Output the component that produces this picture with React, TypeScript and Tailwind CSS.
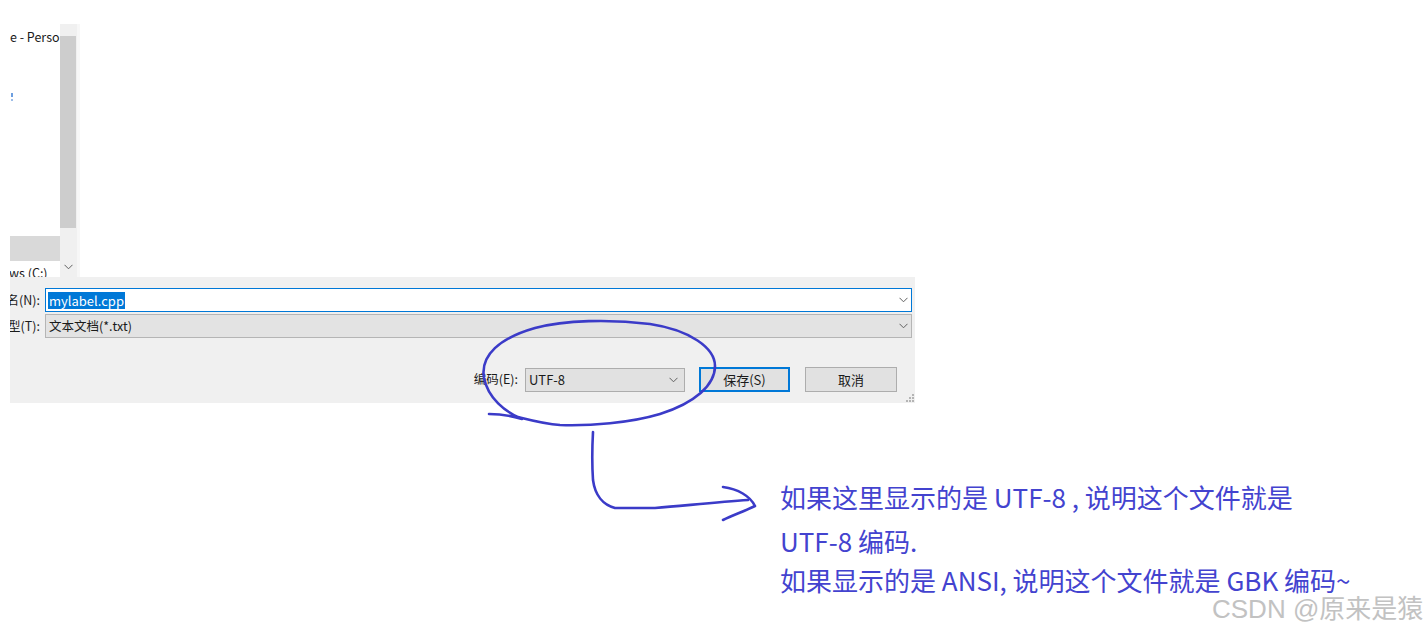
import React from 'react';

const Chevron = ({ className = '' }: { className?: string }) => (
  <svg width="9" height="6" viewBox="0 0 9 6" className={className}>
    <path d="M0.5 0.8 L4.5 4.8 L8.5 0.8" fill="none" stroke="#606060" strokeWidth="1" />
  </svg>
);

const App: React.FC = () => {
  return (
    <div
      className="relative w-[1427px] h-[634px] bg-white overflow-hidden text-[12.5px] text-[#1a1a1a]"
      style={{ fontFamily: '"Noto Sans CJK SC", "Noto Sans", sans-serif' }}
    >
      <div className="pl-[10px]">
        {/* top part of the save dialog: nav pane + scrollbar */}
        <div className="flex h-[277px]">
          <div className="w-[50px] h-[277px] flex flex-col overflow-hidden">
            <div className="h-[29px] shrink-0" />
            <div className="h-[15px] leading-[15px] whitespace-nowrap shrink-0">e - Personal</div>
            <div className="mt-[49px] ml-[1px] flex flex-col gap-[2px] shrink-0">
              <div className="w-[2px] h-[4px] bg-[#6d9fe0]" />
              <div className="w-[2px] h-[2px] bg-[#9dbde8]" />
            </div>
            <div className="mt-[135px] h-[25px] bg-[#d9d9d9] shrink-0" />
            <div className="mt-[4px] leading-[16px] whitespace-nowrap -ml-[1px] shrink-0">ws (C:)</div>
          </div>
          <div className="mt-[24px] w-[17px] h-[253px] bg-[#f0f0f0] flex flex-col">
            <div className="mt-[12px] w-[16px] h-[192px] bg-[#cdcdcd] shrink-0" />
            <div className="mt-[36px] flex justify-center shrink-0">
              <Chevron />
            </div>
          </div>
          <div className="mt-[24px] w-[3px] h-[253px] bg-[#f7f7f7]" />
        </div>

        {/* bottom part: file name / type / encoding */}
        <div className="relative w-[905px] h-[126px] bg-[#f0f0f0] pt-[11px]">
          <div className="flex h-[24px]">
            <div className="w-[35px] flex justify-end items-center overflow-hidden whitespace-nowrap pr-[5px]">文件名(N):</div>
            <div className="w-[867px] border border-[#0078d7] bg-white flex items-center justify-between pl-[2px] pr-[3px]">
              <span className="bg-[#0078d7] text-white text-[13px] leading-[17px] px-[1px]">mylabel.cpp</span>
              <Chevron />
            </div>
          </div>
          <div className="flex h-[24px] mt-[2px]">
            <div className="w-[35px] flex justify-end items-center overflow-hidden whitespace-nowrap pr-[5px]">保存类型(T):</div>
            <div className="w-[867px] border border-[#b5b5b5] bg-[#e3e3e3] flex items-center justify-between pl-[3px] pr-[3px]">
              <span>文本文档(*.txt)</span>
              <Chevron />
            </div>
          </div>
          <div className="flex justify-end items-center h-[25px] mt-[29px] pr-[18px]">
            <span className="mr-[7px]">编码(E):</span>
            <div className="w-[160px] h-[24px] border border-[#adadad] bg-[#e1e1e1] flex items-center justify-between pl-[3px] pr-[6px]">
              <span className="text-[13px]">UTF-8</span>
              <Chevron />
            </div>
            <button className="ml-[14px] w-[91px] h-[25px] border-2 border-[#0078d7] bg-[#e1e1e1] flex items-center justify-center text-[13px]">
              保存(S)
            </button>
            <button className="ml-[15px] w-[92px] h-[25px] border border-[#adadad] bg-[#e1e1e1] flex items-center justify-center text-[13px]">
              取消
            </button>
          </div>
          <svg className="absolute right-[1px] bottom-[1px]" width="10" height="10" viewBox="0 0 10 10">
            {[
              [8, 2],
              [5, 5],
              [8, 5],
              [2, 8],
              [5, 8],
              [8, 8],
            ].map(([x, y], i) => (
              <rect key={i} x={x} y={y} width="2" height="2" fill="#b4b4b4" />
            ))}
          </svg>
        </div>
      </div>

      {/* annotation */}
      <div className="pl-[780px] mt-[72px] text-[26px] text-[#4343cf] whitespace-nowrap">
        <div className="leading-[44px]">如果这里显示的是 UTF-8 , 说明这个文件就是</div>
        <div className="leading-[44px]">UTF-8 编码.</div>
        <div className="leading-[34px]">如果显示的是 ANSI, 说明这个文件就是 GBK 编码~</div>
      </div>

      {/* hand-drawn marks */}
      <svg className="absolute inset-0 pointer-events-none" width="1427" height="634" viewBox="0 0 1427 634">
        <g fill="none" stroke="#3b3bc8" strokeWidth="2.6" strokeLinecap="round" strokeLinejoin="round">
          <path d="M489 414 C500 414 512 416 522 419 C505 412 488 398 484 378 C480 355 500 338 535 328 C565 320 610 319 650 324 C690 330 715 348 715 366 C715 385 695 403 660 414 C630 423 590 426 560 425 C545 424 530 420 518 417" />
          <path d="M593 432 C592 450 592 465 593 480 C595 495 603 505 615 508 L655 508 C690 505 720 502 748 500" />
          <path d="M723 487 C738 489 750 496 755 506 C745 511 733 515 723 520" />
        </g>
      </svg>

      {/* watermark */}
      <div
        className="absolute left-[1212px] top-[597px] text-[26px] leading-[25px] text-[#c2c2c2] whitespace-nowrap"
        style={{ fontFamily: '"Liberation Sans", "Noto Sans CJK SC", sans-serif', textShadow: '0 0 1px #ffffff' }}
      >
        CSDN @原来是猿
      </div>
    </div>
  );
};

export default App;
